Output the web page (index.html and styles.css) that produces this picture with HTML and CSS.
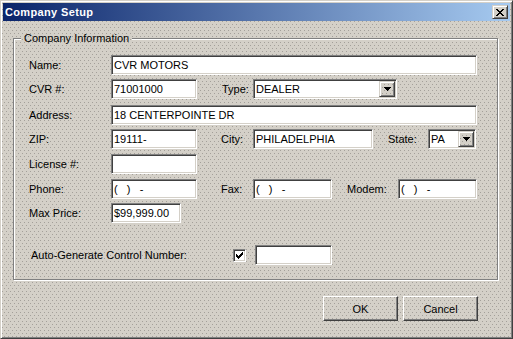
FILE: index.html
```html
<!DOCTYPE html>
<html>
<head>
<meta charset="utf-8">
<title>Company Setup</title>
<link rel="stylesheet" href="styles.css">
</head>
<body>
<div class="window face">
  <div class="titlebar">
    <span class="title">Company Setup</span>
    <span class="close">
      <svg width="8" height="7" viewBox="0 0 8 7" shape-rendering="crispEdges"><path fill="#000" d="M0 0h2v1H0zM6 0h2v1H6zM1 1h2v1H1zM5 1h2v1H5zM2 2h4v1H2zM3 3h2v1H3zM2 4h4v1H2zM1 5h2v1H1zM5 5h2v1H5zM0 6h2v1H0zM6 6h2v1H6z"/></svg>
    </span>
  </div>
  <div class="client">
    <fieldset class="group">
      <legend class="face">Company Information</legend>
      <div class="row">
        <span class="lbl">Name:</span>
        <div class="field w-wide">CVR MOTORS</div>
      </div>
      <div class="row m4">
        <span class="lbl">CVR #:</span>
        <div class="field w-short">71001000</div>
        <span class="lbl2 l-type">Type:</span>
        <div class="field select w-type"><span class="seltext">DEALER</span><span class="ddbtn face"><svg width="7" height="4" viewBox="0 0 7 4" shape-rendering="crispEdges"><path fill="#000" d="M0 0h7v1H0zM1 1h5v1H1zM2 2h3v1H2zM3 3h1v1H3z"/></svg></span></div>
      </div>
      <div class="row m6">
        <span class="lbl">Address:</span>
        <div class="field w-wide">18 CENTERPOINTE DR</div>
      </div>
      <div class="row m4">
        <span class="lbl">ZIP:</span>
        <div class="field w-short">19111-</div>
        <span class="lbl2 l-mid">City:</span>
        <div class="field w-city">PHILADELPHIA</div>
        <span class="lbl2 l-state">State:</span>
        <div class="field select w-state"><span class="seltext">PA</span><span class="ddbtn face"><svg width="7" height="4" viewBox="0 0 7 4" shape-rendering="crispEdges"><path fill="#000" d="M0 0h7v1H0zM1 1h5v1H1zM2 2h3v1H2zM3 3h1v1H3z"/></svg></span></div>
      </div>
      <div class="row m5">
        <span class="lbl">License #:</span>
        <div class="field w-short"></div>
      </div>
      <div class="row m5">
        <span class="lbl">Phone:</span>
        <div class="field w-short">(&nbsp;&nbsp;&nbsp;)&nbsp;&nbsp;&nbsp;-</div>
        <span class="lbl2 l-mid">Fax:</span>
        <div class="field w-phone">(&nbsp;&nbsp;&nbsp;)&nbsp;&nbsp;&nbsp;-</div>
        <span class="lbl2 l-modem">Modem:</span>
        <div class="field w-phone">(&nbsp;&nbsp;&nbsp;)&nbsp;&nbsp;&nbsp;-</div>
      </div>
      <div class="row m4">
        <span class="lbl">Max Price:</span>
        <div class="field w-price">$99,999.00</div>
      </div>
      <div class="row m22">
        <span class="lbl lbl-auto">Auto-Generate Control Number:</span>
        <span class="check"><svg width="7" height="7" viewBox="0 0 7 7" shape-rendering="crispEdges"><path fill="#000" d="M0 2h1v3H0zM1 3h1v3H1zM2 4h1v3H2zM3 3h1v3H3zM4 2h1v3H4zM5 1h1v3H5zM6 0h1v3H6z"/></svg></span>
        <div class="field w-ctrl"></div>
      </div>
    </fieldset>
    <div class="buttons">
      <button class="btn">OK</button>
      <button class="btn">Cancel</button>
    </div>
  </div>
</div>
</body>
</html>
```
FILE: styles.css
```css
* { box-sizing: border-box; }
html, body { margin: 0; padding: 0; }
body {
  width: 513px;
  height: 339px;
  overflow: hidden;
  background: #d4d0c8;
  font-family: "Liberation Sans", Arial, sans-serif;
  font-size: 11px;
  color: #000;
}
.face {
  background-color: #d4d0c8;
  background-image:
    conic-gradient(at 1px 1px, transparent 75%, #a4a09a 0),
    conic-gradient(at 1px 1px, transparent 75%, #a4a09a 0);
  background-size: 4px 6px, 4px 6px;
  background-position: 0 0, 2px 3px;
  background-attachment: fixed, fixed;
}
.window {
  width: 513px;
  height: 339px;
  border: 1px solid;
  border-color: #d4d0c8 #404040 #404040 #d4d0c8;
  box-shadow: inset 1px 1px 0 #fff, inset -1px -1px 0 #808080;
  padding: 2px;
  display: flex;
  flex-direction: column;
}
.titlebar {
  flex: none;
  height: 18px;
  display: flex;
  align-items: center;
  justify-content: space-between;
  padding: 0 2px;
  background: linear-gradient(to right, #0a246a, #a6caf0);
}
.title {
  color: #fff;
  font-weight: bold;
  letter-spacing: 0.35px;
  line-height: 13px;
}
.close {
  display: block;
  width: 16px;
  height: 14px;
  padding: 3px 0 0 3px;
  background: #d4d0c8;
  border: 1px solid;
  border-color: #d4d0c8 #404040 #404040 #d4d0c8;
  box-shadow: inset 1px 1px 0 #fff, inset -1px -1px 0 #808080;
}
.close svg { display: block; }
.client {
  flex: 1;
  padding: 11px 12px 0 10px;
}
.group {
  margin: 0;
  min-width: 0;
  padding: 10px 0 14px 15px;
  border: 1px solid #808080;
  box-shadow: 1px 1px 0 #fff, inset 1px 1px 0 #fff;
}
.group legend {
  margin-left: -8px;
  padding: 0 3px;
  line-height: 13px;
}
.row {
  display: flex;
  align-items: center;
  height: 20px;
}
.m4 { margin-top: 4px; }
.m5 { margin-top: 5px; }
.m6 { margin-top: 6px; }
.m22 { margin-top: 22px; }
.lbl {
  flex: none;
  width: 82px;
  line-height: 13px;
  white-space: nowrap;
}
.lbl-auto { width: 204px; padding-left: 2px; }
.lbl2 {
  flex: none;
  line-height: 13px;
  white-space: nowrap;
}
.l-type { margin-left: 25px; width: 31px; }
.l-mid { margin-left: 24px; width: 32px; }
.l-state { margin-left: 15px; width: 40px; }
.l-modem { margin-left: 15px; width: 51px; }
.field {
  flex: none;
  height: 20px;
  background: #fff;
  border: 1px solid;
  border-color: #808080 #fff #fff #808080;
  box-shadow: inset 1px 1px 0 #404040, inset -1px -1px 0 #d4d0c8;
  padding: 0 2px;
  line-height: 18px;
  white-space: nowrap;
  overflow: hidden;
}
.w-wide { width: 366px; }
.w-short { width: 86px; }
.w-type { width: 144px; }
.w-city { width: 120px; }
.w-state { width: 48px; }
.w-phone { width: 79px; }
.w-price { width: 70px; }
.w-ctrl { width: 77px; margin-left: 9px; }
.select {
  display: flex;
  align-items: center;
  padding-right: 1px;
}
.seltext { flex: 1; }
.ddbtn {
  flex: none;
  width: 16px;
  height: 16px;
  display: flex;
  align-items: center;
  justify-content: center;
  border: 1px solid;
  border-color: #d4d0c8 #404040 #404040 #d4d0c8;
  box-shadow: inset 1px 1px 0 #fff, inset -1px -1px 0 #808080;
}
.ddbtn svg { display: block; }
.check {
  flex: none;
  display: block;
  width: 13px;
  height: 13px;
  padding: 2px 0 0 2px;
  background: #fff;
  border: 1px solid;
  border-color: #808080 #fff #fff #808080;
  box-shadow: inset 1px 1px 0 #404040, inset -1px -1px 0 #d4d0c8;
}
.check svg { display: block; }
.buttons {
  display: flex;
  justify-content: flex-end;
  gap: 5px;
  margin-top: 16px;
  margin-right: 20px;
}
.btn {
  width: 75px;
  height: 25px;
  margin: 0;
  padding: 0;
  font-family: inherit;
  font-size: 11px;
  color: #000;
  background: transparent;
  border: 1px solid;
  border-color: #fff #404040 #404040 #fff;
  box-shadow: inset -1px -1px 0 #808080;
}
```
